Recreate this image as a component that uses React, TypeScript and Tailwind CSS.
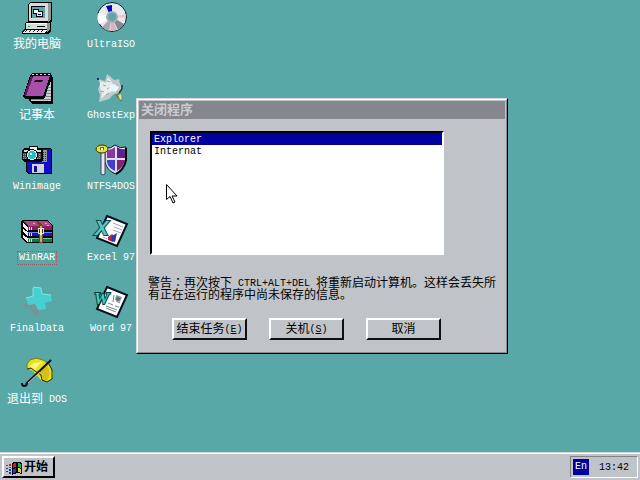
import React from "react";

const teal = "#58a8a8";

function ComputerIcon() {
  return (
    <svg viewBox="0 0 32 32" className="size-8" shapeRendering="crispEdges">
      <path d="M9 0h21l1 1v18l-3 3H8l-1-1V3z" fill="#000" />
      <path d="M9 1h18v18H8V3z" fill="#d8dcdc" />
      <path d="M27 1h3v17l-3 2z" fill="#909898" />
      <path d="M10 4h14v12H10z" fill="#000" />
      <path d="M11 5h13v11H11z" fill="#58a8a8" />
      <path d="M12 7h6v5h-6zM15 9h7v6h-7z" fill="#000" />
      <path d="M13 8h4v3h-4z" fill="#fff" />
      <path d="M16 10h5v4h-5z" fill="#e8f0f0" />
      <path d="M17 12h3v1h-3z" fill="#0000a0" />
      <path d="M6 20h22l2 1v8l-3 3H1v-3l3-3v-5z" fill="#000" />
      <path d="M5 21h21v6H5z" fill="#d8dcdc" />
      <path d="M5 21h21v1H5z" fill="#fff" />
      <path d="M26 21h3v7l-3 2z" fill="#909898" />
      <path d="M16 24h8v1h-8z" fill="#000" />
      <path d="M7 24h2v1H7z" fill="#00b000" />
      <path d="M4 28h22l-2 3H1z" fill="#e8ecec" />
      <path d="M4 30L6 28M8 30l2-2M12 30l2-2M16 30l2-2M20 30l2-2" stroke="#202020" />
    </svg>
  );
}

function DiscIcon() {
  return (
    <svg viewBox="0 0 32 32" className="size-8">
      <circle cx="17" cy="15" r="14.5" fill="#e8e8f0" stroke="#101820" />
      <path d="M17 15L3 11a14 14 0 0 0 1 11z" fill="#fff" />
      <path d="M17 15L7 25a14 14 0 0 0 7 4z" fill="#a8a8b0" />
      <path d="M17 15l-2 14a14 14 0 0 0 7-1z" fill="#d0b8c0" />
      <path d="M17 15l6 13a14 14 0 0 0 6-6z" fill="#808890" />
      <path d="M17 15l14-3v4z" fill="#e8c8c8" />
      <path d="M11 4l6-1v7l-3 1z" fill="#0000c0" />
      <circle cx="17" cy="15" r="6" fill="#a8b0b8" />
      <circle cx="17" cy="15" r="4" fill={teal} stroke="#80a0a0" />
    </svg>
  );
}

function NotebookIcon() {
  return (
    <svg viewBox="0 0 32 32" className="size-8" shapeRendering="crispEdges">
      <path d="M30 3l2 2v26H12l-4-3v-3l18-5z" fill="#000" />
      <path d="M30 8v20H10v-3l14-1z" fill="#d0d0d8" />
      <path d="M27 14h3M26 17h4M25 20h5M24 23h6M10 26.5h20" stroke="#808088" />
      <path d="M11 0h19l1 3-7 21-2 2H4l-2-3 7-20z" fill="#000" />
      <path d="M12 3h17l-7 20H5z" fill="#a850a8" />
      <path d="M10 3L3 22l2 1L12 4z" fill="#601860" />
      <path d="M11 1.5h19" stroke="#e8d0e8" strokeDasharray="2 2" />
      <path d="M14 7h8l-1 2h-8z" fill="#201020" />
    </svg>
  );
}

function GhostIcon() {
  return (
    <svg viewBox="0 0 32 32" className="size-8">
      <path d="M3 6l7 2 2-7 4 3 3 3 5-1 1 5 3 6-4 3-5 1-5 5-10 3 1-7-2-6 2-5z" fill="#c0c8cc" />
      <path d="M5 8l6 2 2-6 3 4 3 5-3 6-6 3-4 4 1-6-2-5z" fill="#e8eeee" />
      <path d="M12 8l3 1M8 12l3 1M16 15l2 3M21 12l2 1M6 18l3 1M11 22l3-2M20 18l3 1M12 16l3-2" stroke="#98a4a8" />
      <path d="M14 13l5-2 5 3-3 5-6-1z" fill="#e8f8f8" />
      <path d="M2 5h2v2H2z" fill="#202878" />
      <path d="M27 12v4l-3 4" fill="none" stroke="#203038" strokeWidth="1.5" />
      <path d="M20 22l4-2 4 5-2 4z" fill="#707858" />
      <path d="M23 22l3-1 1 5-2 1z" fill="#d8e080" />
    </svg>
  );
}

function FloppyIcon() {
  return (
    <svg viewBox="0 0 32 32" className="size-8" shapeRendering="crispEdges">
      <path d="M5 4h24l2 1v25H7l-2-2z" fill="#000" />
      <path d="M6 5h24v24H8l-2-2z" fill="#1010c8" />
      <path d="M12 6h14v12H12z" fill="#909898" />
      <path d="M22 8v9M24 8v9" stroke="#303838" strokeDasharray="1 1" />
      <path d="M11 20h12v9H11z" fill="#d0d4d8" />
      <path d="M13 22h3v6h-3z" fill="#1010a0" />
      <path d="M3 4h5V2h9v2h5v12l-2 2H3l-2-2V6z" fill="#000" />
      <path d="M9 3h7v3H9z" fill="#f0f0f0" />
      <path d="M3 6h17v2H3z" fill="#d0d8d8" />
      <path d="M2 9h18v6H2z" fill="#485050" />
      <path d="M2 10h18M2 12h18M2 14h18" stroke="#909898" strokeDasharray="1 1" />
      <circle cx="11" cy="11" r="6" fill="#000" />
      <circle cx="11" cy="11" r="5" fill="#e8f8f8" />
      <circle cx="11" cy="11" r="4" fill="#20c0c8" />
      <path d="M9 9h2v2H9z" fill="#fff" />
    </svg>
  );
}

function ShieldIcon() {
  return (
    <svg viewBox="0 0 32 32" className="size-8">
      <path d="M10 4q6 1 10-3 5 4 11 2v13q-2 10-10 14-9-3-11-12z" fill="#e0e0ec" stroke="#181828" />
      <path d="M12 6q5 0 8-3v11h-8z" fill="#8838a0" />
      <path d="M22 3q4 3 8 2v9h-8z" fill="#602090" />
      <path d="M12 16h8v11q-7-3-8-9z" fill="#4040c8" />
      <path d="M22 16h8q-2 8-8 11z" fill="#882080" />
      <path d="M31 4v12q-2 10-10 14" fill="none" stroke="#000" strokeWidth="2" />
      <path d="M6 7h4v23l-2 1-2-1z" fill="#e8e8f4" stroke="#404060" strokeWidth="1" />
      <ellipse cx="7" cy="5" rx="6" ry="4" fill="#e8e040" stroke="#303000" />
      <path d="M5 3h4v3H5z" fill="#706820" />
      <path d="M6 4h2v2H6z" fill="#e8f0f0" />
    </svg>
  );
}

function BooksIcon() {
  return (
    <svg viewBox="0 0 32 32" className="size-8" shapeRendering="crispEdges">
      <path d="M1 5h25l6 5v18H6l-6-5V7z" fill="#000" />
      <path d="M2 6h24l5 5H7z" fill="#b04888" />
      <path d="M7 11h24v4H7z" fill="#882060" />
      <path d="M2 8l5 4v4l-5-4zM2 14l5 3v4l-5-4zM2 20l5 3v4l-5-4z" fill="#f0f0f4" />
      <path d="M7 17h24v4H7z" fill="#1818c0" />
      <path d="M7 17h24v1H7z" fill="#7080f0" />
      <path d="M7 23h24v4H7z" fill="#107848" />
      <path d="M7 23h24v1H7z" fill="#70c090" />
      <path d="M8 12v3M8 18v3M8 24v3M10 12v3M10 18v3M10 24v3" stroke="#e8e8e8" />
      <path d="M15 6h3l4 5v17h-4V11z" fill="#604830" />
      <path d="M19 11h2v16h-2z" fill="#d0a868" />
      <path d="M17 13h6v6h-6z" fill="#e8e0a0" />
      <path d="M18 14h4v4h-4z" fill="#403018" />
      <path d="M19 14h2v6h-2z" fill="#f8f0c0" />
      <path d="M24 8h2M26 10h2M12 8h2" stroke="#f0a0d0" />
    </svg>
  );
}

function OfficePaper({ children }: { children: React.ReactNode }) {
  return (
    <svg viewBox="0 0 32 32" className="size-8 overflow-visible">
      <path d="M12 1l20 8-10 22-20-8z" fill="#fff" stroke="#081020" strokeWidth="2" />
      {children}
    </svg>
  );
}

function ExcelIcon() {
  return (
    <OfficePaper>
      <path d="M18 8l10 4M19 12l8 3M18 15l8 3M9 19l5 2M8 22l4 2" stroke="#a0a8b0" />
      <path d="M13 22l4-3 2 2-1 6-5-2z" fill="#c02040" />
      <path d="M17 21l5-3-2 9-4-1z" fill="#3038b0" />
      <text
        x="0"
        y="20"
        fontSize="20"
        fontWeight="700"
        fontStyle="italic"
        fill="#58c8c8"
        stroke="#104850"
        strokeWidth="2"
        paintOrder="stroke"
        className="font-['Liberation_Sans',sans-serif]"
      >
        X
      </text>
    </OfficePaper>
  );
}

function WordIcon() {
  return (
    <OfficePaper>
      <path d="M13 17l5 2M20 20l4 1M11 20l11 4M11 22l10 4M19 9l-1 7M25 17l-4-2" stroke="#788090" />
      <path d="M21 9l6 2-2 5-5-2z" fill="#60a8b0" />
      <path d="M22 11l3 1-1 3-3-1z" fill="#a04860" />
      <text
        x="-1"
        y="18"
        fontSize="17"
        fontWeight="700"
        fontStyle="italic"
        fill="#40d0c0"
        stroke="#003838"
        strokeWidth="2"
        paintOrder="stroke"
        className="font-['Liberation_Serif',serif]"
      >
        W
      </text>
    </OfficePaper>
  );
}

function CrossIcon() {
  return (
    <svg viewBox="0 0 32 32" className="size-8">
      <path d="M3 17l6 1 3-3 8 9-3 1 2 5-6-1-3-6-7-1z" fill="#789498" />
      <path d="M12 1l8 1 1 6 9 1 1 6-7 2 1 6-8 1-3-6-7 1-2-7 7-2z" fill="#48d0d0" />
      <path d="M12 1l8 1 1 6 9 1M5 12l7-2V2" fill="none" stroke="#80e8e4" />
    </svg>
  );
}

function UmbrellaIcon() {
  return (
    <svg viewBox="0 0 32 32" className="size-8">
      <path d="M6 12V7l3-4 6-2 7 2 6 5 4 8-1 6-5 3-6-2-8-9-6-3z" fill="#e8e020" />
      <path d="M8 11q3-7 14-6-6 3-8 9l-3-3z" fill="#f8f878" />
      <path d="M26 8q-7 2-8 8l3 3 1 4 4 1q5-8 0-16z" fill="#d0c018" />
      <path d="M28 7l3 6v9l-5 3-5-2-1-5-6-4-4-3-4 1" fill="none" stroke="#282800" />
      <path d="M6 12V7l3-4 6-2 7 2 6 4" fill="none" stroke="#807810" />
      <path d="M30 3L5 27" stroke="#101010" strokeWidth="2" />
      <path d="M19 15L6 27" stroke="#d0c8d8" />
      <path d="M6 26q0 3-3 3-2 0-2-3" fill="none" stroke="#181018" strokeWidth="2" />
    </svg>
  );
}

function StartLogo() {
  return (
    <svg viewBox="0 0 17 14" className="h-[14px] w-[17px]" shapeRendering="crispEdges">
      <path d="M6 2q5-3 10 0v11q-5-2-10 1z" fill="#000" />
      <path d="M7 3q2-1 3-1v4q-2 0-3 1z" fill="#d02020" />
      <path d="M12 2l3 1v4l-3-1z" fill="#20b040" />
      <path d="M7 8l3-1v4l-3 1z" fill="#2838d0" />
      <path d="M12 7l3 1v4l-3-1z" fill="#e8d820" />
      <path d="M3 3h2v2H3zM0 4h2v1H0zM3 6h2v1H3z" fill="#c02828" />
      <path d="M0 7h2v1H0zM3 8h2v2H3zM0 10h2v1H0zM3 11h2v2H3z" fill="#2030a8" />
    </svg>
  );
}

/* Half-width characters are set smaller so two of them fill one full-width cell. */
function Half({ children }: { children: React.ReactNode }) {
  return <span className="align-[1px] text-[10px] leading-none">{children}</span>;
}

const shortcuts: { icon: React.ReactNode; label: React.ReactNode; id: string; focused?: boolean }[] = [
  { id: "computer", icon: <ComputerIcon />, label: "我的电脑" },
  { id: "notepad", icon: <NotebookIcon />, label: "记事本" },
  { id: "winimage", icon: <FloppyIcon />, label: <Half>Winimage</Half> },
  { id: "winrar", icon: <BooksIcon />, label: <Half>WinRAR</Half>, focused: true },
  { id: "finaldata", icon: <CrossIcon />, label: <Half>FinalData</Half> },
  { id: "dos", icon: <UmbrellaIcon />, label: <>退出到<Half> DOS</Half></> },
  { id: "ultraiso", icon: <DiscIcon />, label: <Half>UltraISO</Half> },
  { id: "ghost", icon: <GhostIcon />, label: <Half>GhostExp</Half> },
  { id: "ntfs", icon: <ShieldIcon />, label: <Half>NTFS4DOS</Half> },
  { id: "excel", icon: <ExcelIcon />, label: <Half>Excel 97</Half> },
  { id: "word", icon: <WordIcon />, label: <Half>Word 97</Half> },
];

function DialogButton({ children }: { children: React.ReactNode }) {
  return (
    <button className="flex h-[22px] w-[75px] items-center justify-center border-2 border-t-white border-l-white border-r-[#101010] border-b-[#101010] pt-0.5 leading-3 whitespace-nowrap">
      <span>{children}</span>
    </button>
  );
}

function CloseProgramDialog() {
  return (
    <section
      role="dialog"
      aria-labelledby="dialog-title"
      className="absolute top-[98px] left-[136px] w-[372px] border border-t-[#d4d8dc] border-r-black border-b-black border-l-[#d4d8dc] bg-[#c0c4c8]"
    >
      <div className="border border-t-white border-r-[#888c90] border-b-[#888c90] border-l-white p-px">
        <h1 id="dialog-title" className="h-[18px] bg-[#86868e] px-0.5 text-[13px] leading-5 font-bold text-[#c8ccd0]">
          关闭程序
        </h1>
        <div className="pt-3 pr-1 pb-[11px] pl-[9px]">
          <select
            size={10}
            defaultValue="Explorer"
            aria-label="关闭程序"
            className="mx-0.5 block h-[124px] w-[294px] appearance-none overflow-hidden rounded-none border-2 border-t-black border-r-white border-b-white border-l-black bg-white p-0 text-[10px] leading-3 text-black outline-none"
          >
            <option className="h-3 min-h-3 px-0.5 pt-px pb-0 leading-3 checked:bg-[#0000a0] checked:bg-[linear-gradient(#0000a0,#0000a0)] checked:text-white">
              Explorer
            </option>
            <option className="h-3 min-h-3 px-0.5 pt-px pb-0 leading-3">Internat</option>
          </select>
          <p className="mt-[21px] leading-3">
            警告<span className="font-['Noto_Sans_CJK_TC',sans-serif]" lang="zh-TW">：</span>再次按下<Half> CTRL+ALT+DEL </Half>将重新启动计算机。这样会丢失所有正在运行的程序中尚未保存的信息。
          </p>
          <div className="mt-4 flex gap-[22px] pl-6">
            <DialogButton>
              结束任务<Half>(<u>E</u>)</Half>
            </DialogButton>
            <DialogButton>
              关机<Half>(<u>S</u>)</Half>
            </DialogButton>
            <DialogButton>取消</DialogButton>
          </div>
        </div>
      </div>
    </section>
  );
}

export default function App() {
  return (
    <div className="flex h-screen flex-col overflow-hidden bg-[#58a8a8] font-['Liberation_Mono','Noto_Sans_CJK_SC',monospace] text-xs text-black">
      <main className="relative min-h-0 flex-1">
        <div className="grid auto-cols-[74px] grid-flow-col grid-rows-[repeat(6,71px)] pt-0.5">
          {shortcuts.map((s) => (
            <button key={s.id} className="flex flex-col items-center gap-1 self-start text-white">
              {s.icon}
              <span
                className={
                  s.focused
                    ? "border border-dotted border-[#a05868] px-px leading-3 whitespace-pre"
                    : "border border-transparent px-px leading-3 whitespace-pre"
                }
              >
                {s.label}
              </span>
            </button>
          ))}
        </div>
        <CloseProgramDialog />
        <svg viewBox="0 0 12 20" className="absolute top-[184px] left-[166px] h-5 w-3">
          <path d="M.5.5v15l3.500-3 3 6.500 2-1-3-6h5z" fill="#fff" stroke="#000" />
        </svg>
      </main>
      <footer className="flex h-7 items-start justify-between border-t border-[#d4d8dc] bg-[#c0c4c8] pt-[3px] shadow-[inset_0_1px_0_#fff]">
        <button className="ml-0.5 flex h-[22px] w-[53px] items-center gap-px border-2 border-t-white border-r-black border-b-black border-l-white pt-0.5 pl-0.5 leading-3 font-bold whitespace-nowrap">
          <StartLogo />
          开始
        </button>
        <div className="mr-0.5 flex h-[22px] items-center gap-2.5 border border-t-[#808488] border-r-white border-b-white border-l-[#808488] pr-2 pl-0.5 text-[10px]">
          <button className="size-4 bg-[#0000a0] leading-4 text-white">En</button>
          <time className="pt-0.5">13:42</time>
        </div>
      </footer>
    </div>
  );
}
